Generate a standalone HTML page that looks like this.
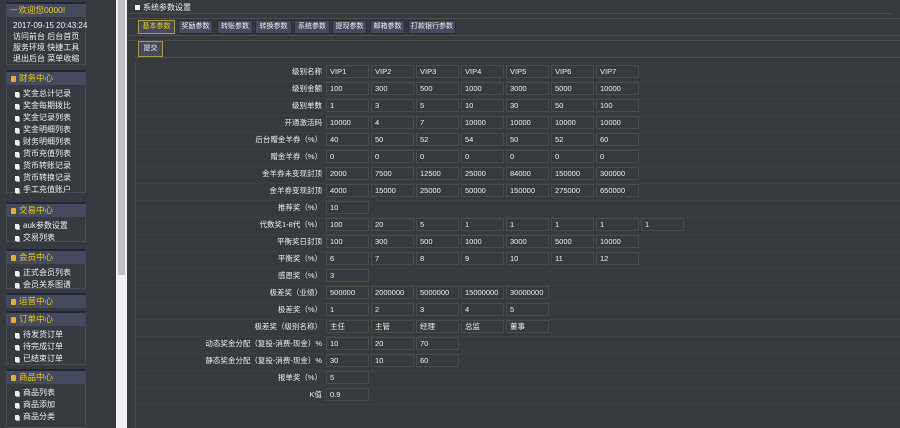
<!DOCTYPE html>
<html><head><meta charset="utf-8"><style>
*{margin:0;padding:0;box-sizing:border-box}
body{width:900px;height:428px;overflow:hidden;background:#363a3f;font-family:"Liberation Sans","Noto Sans CJK SC",sans-serif;font-size:7.5px;color:#ddd;position:relative}
.side{position:absolute;left:0;top:0;width:116px;height:428px;background:#363a3f}
.pan{position:absolute;left:6px;width:80px;border:1px solid #4a4d50;border-top:2px solid #1e2638}
.ph{height:13px;background:#454a5e;color:#f0d000;font-size:8.5px;line-height:13px;padding-left:4px;white-space:nowrap}
.ph i{display:inline-block;width:5px;height:6px;background:#e8b030;margin-right:3px;vertical-align:-1px;border-radius:1px}
.it{height:12px;line-height:12px;padding-left:8px;color:#f0f0f0;font-size:8px;white-space:nowrap}
.it:before{content:"";display:inline-block;width:4px;height:5px;background:#eee;margin-right:4px;vertical-align:-1px;box-shadow:1px 1px 0 #aaa}
.wl{height:11px;line-height:11px;padding-left:6px;color:#f0f0f0;font-size:8px;white-space:nowrap}
.sb{position:absolute;left:116px;top:0;width:11px;height:428px;background:#f1f1f1}
.th{position:absolute;left:118px;top:0;width:7px;height:275px;background:#c1c1c1}
.hl{position:absolute;height:1px;background:#4b4f48}
.tab{position:absolute;top:20px;height:14px;border:1px solid #2a2d30;background:#454a5e;color:#eee;font-size:7px;line-height:12px;text-align:center;white-space:nowrap}
.tab.a{border-color:#a89a40;color:#f0d000}
.rows{position:absolute;left:136px;top:65px;width:764px}
.r{height:17px;display:flex;border-bottom:1px solid #3c4045}
.l{width:190px;text-align:right;padding-right:4px;line-height:13px;color:#eee;font-size:7.5px;white-space:nowrap}
.r span{display:block;width:43px;height:13px;border:1px solid #4b4d45;margin-right:2px;line-height:11px;padding-left:3px;color:#f0f0f0;font-size:7.5px}
</style></head><body>
<div class="side">
<div class="pan" style="top:2px;height:63px"><div class="ph" style="padding-left:3px">－欢迎您0000!</div>
<div class="wl" style="margin-top:3px">2017-09-15 20:43:24</div><div class="wl">访问前台 后台首页</div><div class="wl">服务环境 快捷工具</div><div class="wl">退出后台 菜单收缩</div></div>
<div class="pan" style="top:70px;height:123px"><div class="ph"><i></i>财务中心</div><div style="height:3px"></div>
<div class="it">奖金总计记录</div><div class="it">奖金每期拨比</div><div class="it">奖金记录列表</div><div class="it">奖金明细列表</div><div class="it">财务明细列表</div><div class="it">货币充值列表</div><div class="it">货币转账记录</div><div class="it">货币转换记录</div><div class="it">手工充值账户</div></div>
<div class="pan" style="top:202px;height:40px"><div class="ph"><i></i>交易中心</div><div style="height:3px"></div><div class="it">auk参数设置</div><div class="it">交易列表</div></div>
<div class="pan" style="top:249px;height:40px"><div class="ph"><i></i>会员中心</div><div style="height:3px"></div><div class="it">正式会员列表</div><div class="it">会员关系图谱</div></div>
<div class="pan" style="top:293px;height:15px"><div class="ph"><i></i>运营中心</div></div>
<div class="pan" style="top:311px;height:54px"><div class="ph"><i></i>订单中心</div><div style="height:3px"></div><div class="it">待发货订单</div><div class="it">待完成订单</div><div class="it">已结束订单</div></div>
<div class="pan" style="top:369px;height:59px"><div class="ph"><i></i>商品中心</div><div style="height:3px"></div><div class="it">商品列表</div><div class="it">商品添加</div><div class="it">商品分类</div></div>
</div>
<div class="sb"></div><div class="th"></div>
<div style="position:absolute;left:135px;top:2px;font-size:8px;color:#eee"><span style="display:inline-block;width:5px;height:5px;background:#eee;margin-right:3px"></span>系统参数设置</div>
<div class="hl" style="left:128px;top:13px;width:764px"></div>
<div class="hl" style="left:128px;top:18px;width:772px"></div>
<div class="hl" style="left:128px;top:35px;width:772px"></div>
<div class="hl" style="left:128px;top:40px;width:772px"></div>
<div class="hl" style="left:135px;top:57px;width:765px"></div>
<div style="position:absolute;left:135px;top:62px;width:1px;height:366px;background:#4b4f48"></div>
<div class="tab a" style="left:138px;width:37px">基本参数</div>
<div class="tab" style="left:178px;width:35px">奖励参数</div>
<div class="tab" style="left:217px;width:36px">转账参数</div>
<div class="tab" style="left:255px;width:37px">转换参数</div>
<div class="tab" style="left:294px;width:36px">系统参数</div>
<div class="tab" style="left:332px;width:35px">提现参数</div>
<div class="tab" style="left:370px;width:35px">邮箱参数</div>
<div class="tab" style="left:408px;width:48px">打款银行参数</div>
<div class="tab a" style="left:138px;top:41px;width:25px;height:16px;line-height:14px;color:#eee">提交</div>
<div class="rows">
<div class="r"><div class="l">级别名称</div><span>VIP1</span><span>VIP2</span><span>VIP3</span><span>VIP4</span><span>VIP5</span><span>VIP6</span><span>VIP7</span></div>
<div class="r"><div class="l">级别金额</div><span>100</span><span>300</span><span>500</span><span>1000</span><span>3000</span><span>5000</span><span>10000</span></div>
<div class="r"><div class="l">级别单数</div><span>1</span><span>3</span><span>5</span><span>10</span><span>30</span><span>50</span><span>100</span></div>
<div class="r"><div class="l">开通激活码</div><span>10000</span><span>4</span><span>7</span><span>10000</span><span>10000</span><span>10000</span><span>10000</span></div>
<div class="r"><div class="l">后台赠金羊券（%）</div><span>40</span><span>50</span><span>52</span><span>54</span><span>50</span><span>52</span><span>60</span></div>
<div class="r"><div class="l">赠金羊券（%）</div><span>0</span><span>0</span><span>0</span><span>0</span><span>0</span><span>0</span><span>0</span></div>
<div class="r"><div class="l">金羊券未变现封顶</div><span>2000</span><span>7500</span><span>12500</span><span>25000</span><span>84000</span><span>150000</span><span>300000</span></div>
<div class="r"><div class="l">金羊券变现封顶</div><span>4000</span><span>15000</span><span>25000</span><span>50000</span><span>150000</span><span>275000</span><span>650000</span></div>
<div class="r"><div class="l">推荐奖（%）</div><span>10</span></div>
<div class="r"><div class="l">代数奖1-8代（%）</div><span>100</span><span>20</span><span>5</span><span>1</span><span>1</span><span>1</span><span>1</span><span>1</span></div>
<div class="r"><div class="l">平衡奖日封顶</div><span>100</span><span>300</span><span>500</span><span>1000</span><span>3000</span><span>5000</span><span>10000</span></div>
<div class="r"><div class="l">平衡奖（%）</div><span>6</span><span>7</span><span>8</span><span>9</span><span>10</span><span>11</span><span>12</span></div>
<div class="r"><div class="l">感恩奖（%）</div><span>3</span></div>
<div class="r"><div class="l">极差奖（业绩）</div><span>500000</span><span>2000000</span><span>5000000</span><span>15000000</span><span>30000000</span></div>
<div class="r"><div class="l">极差奖（%）</div><span>1</span><span>2</span><span>3</span><span>4</span><span>5</span></div>
<div class="r"><div class="l">极差奖（级别名称）</div><span>主任</span><span>主管</span><span>经理</span><span>总监</span><span>董事</span></div>
<div class="r"><div class="l">动态奖金分配（复投-消费-现金）%</div><span>10</span><span>20</span><span>70</span></div>
<div class="r"><div class="l">静态奖金分配（复投-消费-现金）%</div><span>30</span><span>10</span><span>60</span></div>
<div class="r"><div class="l">报单奖（%）</div><span>5</span></div>
<div class="r"><div class="l">K值</div><span>0.9</span></div>
</div>
</body></html>
